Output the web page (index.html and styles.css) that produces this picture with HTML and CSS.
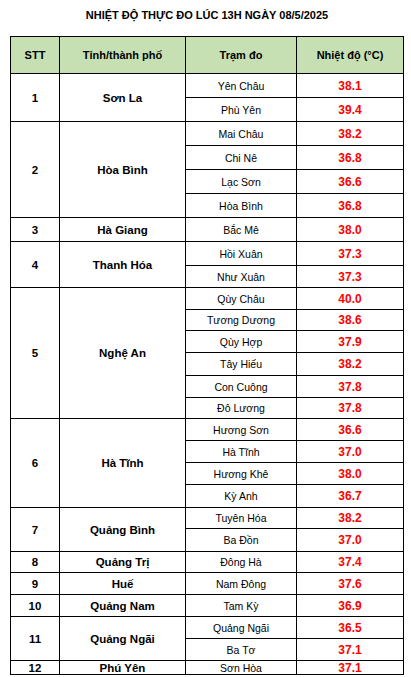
FILE: index.html
```html
<!DOCTYPE html>
<html lang="vi">
<head>
<meta charset="utf-8">
<title>Nhiệt độ thực đo</title>
<link rel="stylesheet" href="styles.css">
</head>
<body>
<div class="title">NHIỆT ĐỘ THỰC ĐO LÚC 13H NGÀY 08/5/2025</div>
<div class="grid">
  <div class="cell head">STT</div>
  <div class="cell head">Tỉnh/thành phố</div>
  <div class="cell head">Trạm đo</div>
  <div class="cell head">Nhiệt độ (°C)</div>

  <div class="cell stt s2">1</div>
  <div class="cell prov s2">Sơn La</div>
  <div class="cell st">Yên Châu</div><div class="cell t">38.1</div>
  <div class="cell st">Phù Yên</div><div class="cell t">39.4</div>

  <div class="cell stt s4">2</div>
  <div class="cell prov s4">Hòa Bình</div>
  <div class="cell st">Mai Châu</div><div class="cell t">38.2</div>
  <div class="cell st">Chi Nê</div><div class="cell t">36.8</div>
  <div class="cell st">Lạc Sơn</div><div class="cell t">36.6</div>
  <div class="cell st">Hòa Bình</div><div class="cell t">36.8</div>

  <div class="cell stt">3</div>
  <div class="cell prov">Hà Giang</div>
  <div class="cell st">Bắc Mê</div><div class="cell t">38.0</div>

  <div class="cell stt s2">4</div>
  <div class="cell prov s2">Thanh Hóa</div>
  <div class="cell st">Hồi Xuân</div><div class="cell t">37.3</div>
  <div class="cell st">Như Xuân</div><div class="cell t">37.3</div>

  <div class="cell stt s6">5</div>
  <div class="cell prov s6">Nghệ An</div>
  <div class="cell st">Qùy Châu</div><div class="cell t">40.0</div>
  <div class="cell st">Tương Dương</div><div class="cell t">38.6</div>
  <div class="cell st">Qùy Hợp</div><div class="cell t">37.9</div>
  <div class="cell st">Tây Hiếu</div><div class="cell t">38.2</div>
  <div class="cell st">Con Cuông</div><div class="cell t">37.8</div>
  <div class="cell st">Đô Lương</div><div class="cell t">37.8</div>

  <div class="cell stt s4">6</div>
  <div class="cell prov s4">Hà Tĩnh</div>
  <div class="cell st">Hương Sơn</div><div class="cell t">36.6</div>
  <div class="cell st">Hà Tĩnh</div><div class="cell t">37.0</div>
  <div class="cell st">Hương Khê</div><div class="cell t">38.0</div>
  <div class="cell st">Kỳ Anh</div><div class="cell t">36.7</div>

  <div class="cell stt s2">7</div>
  <div class="cell prov s2">Quảng Bình</div>
  <div class="cell st">Tuyên Hóa</div><div class="cell t">38.2</div>
  <div class="cell st">Ba Đồn</div><div class="cell t">37.0</div>

  <div class="cell stt">8</div>
  <div class="cell prov">Quảng Trị</div>
  <div class="cell st">Đông Hà</div><div class="cell t">37.4</div>

  <div class="cell stt">9</div>
  <div class="cell prov">Huế</div>
  <div class="cell st">Nam Đông</div><div class="cell t">37.6</div>

  <div class="cell stt">10</div>
  <div class="cell prov">Quảng Nam</div>
  <div class="cell st">Tam Kỳ</div><div class="cell t">36.9</div>

  <div class="cell stt s2">11</div>
  <div class="cell prov s2">Quảng Ngãi</div>
  <div class="cell st">Quảng Ngãi</div><div class="cell t">36.5</div>
  <div class="cell st">Ba Tơ</div><div class="cell t">37.1</div>

  <div class="cell stt">12</div>
  <div class="cell prov">Phú Yên</div>
  <div class="cell st">Sơn Hòa</div><div class="cell t">37.1</div>
</div>
</body>
</html>
```
FILE: styles.css
```css
html, body {
  margin: 0;
  padding: 0;
  background: #ffffff;
  overflow: hidden;
}
body {
  font-family: "Liberation Sans", Arial, sans-serif;
  color: #000000;
  width: 411px;
  height: 677px;
}
.title {
  height: 30px;
  line-height: 30px;
  margin-bottom: 6px;
  text-align: center;
  font-weight: bold;
  font-size: 11px;
  padding-left: 3px;
}
.grid {
  margin-left: 10px;
  width: 394px;
  box-sizing: border-box;
  display: grid;
  grid-template-columns: 48px 125px 110px 106px;
  grid-template-rows:
    36px
    23px 23px 23px 23px 23px 23px 23px 23px
    21px 21px 20px 21px 22px 21px 20px 21px 21px 21px
    22px 20px 22px 20px 21px 21px 21px 21px 13px;
  gap: 1px;
  padding: 1px;
  background: #000000;
}
.cell {
  background: #ffffff;
  display: flex;
  align-items: center;
  justify-content: center;
  text-align: center;
  white-space: nowrap;
  overflow: hidden;
}
.head {
  background: #c6e0b4;
  font-weight: bold;
  font-size: 11px;
}
.stt {
  grid-column: 1;
  font-weight: bold;
  font-size: 11.5px;
}
.prov {
  grid-column: 2;
  font-weight: bold;
  font-size: 11.5px;
}
.st {
  grid-column: 3;
  font-size: 10.5px;
}
.t {
  grid-column: 4;
  font-weight: bold;
  font-size: 12px;
  color: #ff0000;
}
.s2 { grid-row: span 2; }
.s4 { grid-row: span 4; }
.s6 { grid-row: span 6; }
```
